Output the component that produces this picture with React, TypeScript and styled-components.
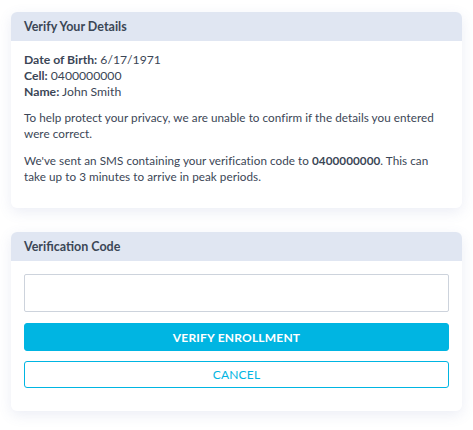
import styled, { createGlobalStyle } from 'styled-components'

const GlobalStyle = createGlobalStyle`
  html, body {
    margin: 0;
    padding: 0;
    background: #ffffff;
  }
  body {
    font-family: Lato, 'Open Sans', 'Liberation Sans', sans-serif;
    color: #3b4656;
  }
`

const Page = styled.div`
  display: flex;
  flex-direction: column;
  gap: 24px;
  padding: 12px 11px 18px 11px;
`

const Card = styled.section`
  background: #fff;
  border-radius: 6px;
  box-shadow: 0 4px 14px rgba(90, 110, 170, 0.12);
  overflow: hidden;
`

const CardHeader = styled.h2`
  margin: 0;
  height: 29px;
  display: flex;
  align-items: center;
  padding: 0 13px;
  background: #e0e6f2;
  font-size: 12.5px;
  font-weight: 700;
  color: #3b4656;
`

const CardBody = styled.div<{ $pad?: string }>`
  padding: ${(p) => p.$pad || '11px 13px 24px'};
  display: flex;
  flex-direction: column;
`

const Details = styled.div`
  font-size: 12.2px;
  line-height: 16px;
  margin-bottom: 9px;
`

const Para = styled.p`
  margin: 0 0 11px;
  font-size: 11.7px;
  line-height: 16px;
  letter-spacing: 0.05px;
  &:last-child {
    margin-bottom: 0;
  }
`

const Input = styled.input`
  height: 38px;
  box-sizing: border-box;
  border: 1px solid #cdd3dc;
  border-radius: 2px;
  margin-bottom: 11px;
  font: inherit;
`

const Button = styled.button<{ $primary?: boolean }>`
  height: ${(p) => (p.$primary ? '28px' : '27px')};
  border-radius: 3px;
  border: 1px solid #00b5e2;
  background: ${(p) => (p.$primary ? '#00b5e2' : '#fff')};
  color: ${(p) => (p.$primary ? '#fff' : '#00b5e2')};
  font-family: inherit;
  font-size: 12px;
  font-weight: ${(p) => (p.$primary ? 700 : 400)};
  letter-spacing: 0.2px;
  text-transform: uppercase;
  margin-bottom: 10px;
  &:last-child {
    margin-bottom: 0;
  }
`

export default function App() {
  return (
    <>
      <GlobalStyle />
      <Page>
        <Card>
          <CardHeader>Verify Your Details</CardHeader>
          <CardBody>
            <Details>
              <b>Date of Birth:</b> 6/17/1971
              <br />
              <b>Cell:</b> 0400000000
              <br />
              <b>Name:</b> John Smith
            </Details>
            <Para>
              To help protect your privacy, we are unable to confirm if the details you entered
              were correct.
            </Para>
            <Para>
              We've sent an SMS containing your verification code to <b>0400000000</b>. This can
              take up to 3 minutes to arrive in peak periods.
            </Para>
          </CardBody>
        </Card>
        <Card>
          <CardHeader>Verification Code</CardHeader>
          <CardBody $pad="13px 13px 23px">
            <Input type="text" />
            <Button $primary>Verify Enrollment</Button>
            <Button>Cancel</Button>
          </CardBody>
        </Card>
      </Page>
    </>
  )
}
